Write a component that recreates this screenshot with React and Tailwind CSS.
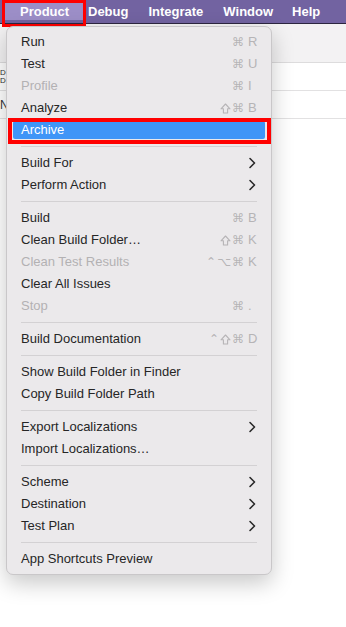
import React from 'react';

// Xcode "Product" menu, opened from the macOS menu bar
const MENU = [
  { label: 'Run', keys: '⌘R' },
  { label: 'Test', keys: '⌘U' },
  { label: 'Profile', keys: '⌘I', disabled: true },
  { label: 'Analyze', keys: '⇧⌘B' },
  { label: 'Archive', active: true },
  'sep',
  { label: 'Build For', sub: true },
  { label: 'Perform Action', sub: true },
  'sep',
  { label: 'Build', keys: '⌘B' },
  { label: 'Clean Build Folder…', keys: '⇧⌘K' },
  { label: 'Clean Test Results', keys: '⌃⌥⌘K', disabled: true },
  { label: 'Clear All Issues' },
  { label: 'Stop', keys: '⌘.', disabled: true },
  'sep',
  { label: 'Build Documentation', keys: '⌃⇧⌘D' },
  'sep',
  { label: 'Show Build Folder in Finder' },
  { label: 'Copy Build Folder Path' },
  'sep',
  { label: 'Export Localizations', sub: true },
  { label: 'Import Localizations…' },
  'sep',
  { label: 'Scheme', sub: true },
  { label: 'Destination', sub: true },
  { label: 'Test Plan', sub: true },
  'sep',
  { label: 'App Shortcuts Preview' },
];

const Chevron = () => (
  <svg width="8" height="12" viewBox="0 0 8 12" className="mr-[1px]">
    <path d="M2 1.5 L6.5 6 L2 10.5" fill="none" stroke="#2a2a2a" strokeWidth="1.6" strokeLinecap="round" strokeLinejoin="round" />
  </svg>
);

// outlined shift arrow
const ShiftGlyph = () => (
  <svg width="11" height="11" viewBox="0 0 11 11" className="mr-[1px]">
    <path d="M5.5 1 L10 5.8 H7.6 V10 H3.4 V5.8 H1 Z" fill="none" stroke="#b6b4b6" strokeWidth="1.1" strokeLinejoin="round" />
  </svg>
);

const Shortcut = ({ keys }) => {
  const mods = keys.slice(0, -1).split('');
  const key = keys.slice(-1);
  return (
    <span className="flex items-center text-[#b6b4b6] text-[13px] mr-[-2px]">
      {mods.map((m, i) =>
        m === '⇧' ? (
          <ShiftGlyph key={i} />
        ) : (
          <span key={i} className="font-['DejaVu_Sans',sans-serif] text-[12px] mr-[1px]">{m}</span>
        )
      )}
      <span className="ml-[3px] w-[11px] text-left">{key}</span>
    </span>
  );
};

const MenuItem = ({ item }) => {
  if (item.active) {
    return (
      <div className="relative h-[22px] flex items-center px-[6px]">
        <div className="flex-1 h-[18px] bg-[#3f95f7] rounded-[2px] flex items-center pl-[8px] text-white">
          {item.label}
        </div>
        {/* red annotation box */}
        <div className="absolute left-[1px] right-[0px] -top-[1px] h-[26px] border-[4px] border-[#ff0000] pointer-events-none" />
      </div>
    );
  }
  return (
    <div className={`h-[22px] flex items-center justify-between pl-[14px] pr-[14px] ${item.disabled ? 'text-[#b3b1b3]' : 'text-[#262626]'}`}>
      <span>{item.label}</span>
      {item.keys && <Shortcut keys={item.keys} />}
      {item.sub && <Chevron />}
    </div>
  );
};

export default function App() {
  return (
    <div className="relative w-[346px] h-[627px] bg-white overflow-hidden font-['Liberation_Sans',Arial,sans-serif] text-[13px]">
      {/* menu bar */}
      <div className="h-[24px] bg-[#7263a1] border-b border-[#2c2640] flex items-center text-white font-semibold text-[13px]">
        <div className="relative h-full w-[84px] ml-[2px] flex items-center">
          <div className="absolute inset-[3px] bg-[#9c8ec7]" />
          <span className="relative ml-[18px]">Product</span>
          <div className="absolute left-0 right-0 top-0 h-[27px] border-[3px] border-[#ff0000]" />
        </div>
        <span className="ml-[2px]">Debug</span>
        <span className="ml-[20px]">Integrate</span>
        <span className="ml-[20px]">Window</span>
        <span className="ml-[19px]">Help</span>
      </div>

      {/* window content behind the menu */}
      <div className="h-[39px] bg-[#f3f2f3] border-b border-[#dddcdd]" />
      <div className="h-[28px] border-b border-[#e2e1e2] flex items-center text-[8px] text-[#333] leading-[8px]">
        <span>D<br />D</span>
      </div>
      <div className="h-[28px] border-b border-[#e2e1e2] flex items-center text-[12px] text-[#333]">
        <span>N</span>
      </div>

      {/* dropdown menu */}
      <div className="absolute left-[6px] top-[26px] w-[266px] bg-[#ebe9eb] rounded-[7px] border border-[#c9c7c9] shadow-[0_8px_22px_rgba(0,0,0,0.22)] py-[4px]">
        {MENU.map((item, i) =>
          item === 'sep' ? (
            <div key={i} className="h-[11px] flex items-center px-[14px]">
              <div className="h-px w-full bg-[#d3d1d3]" />
            </div>
          ) : (
            <MenuItem key={i} item={item} />
          )
        )}
      </div>
    </div>
  );
}
